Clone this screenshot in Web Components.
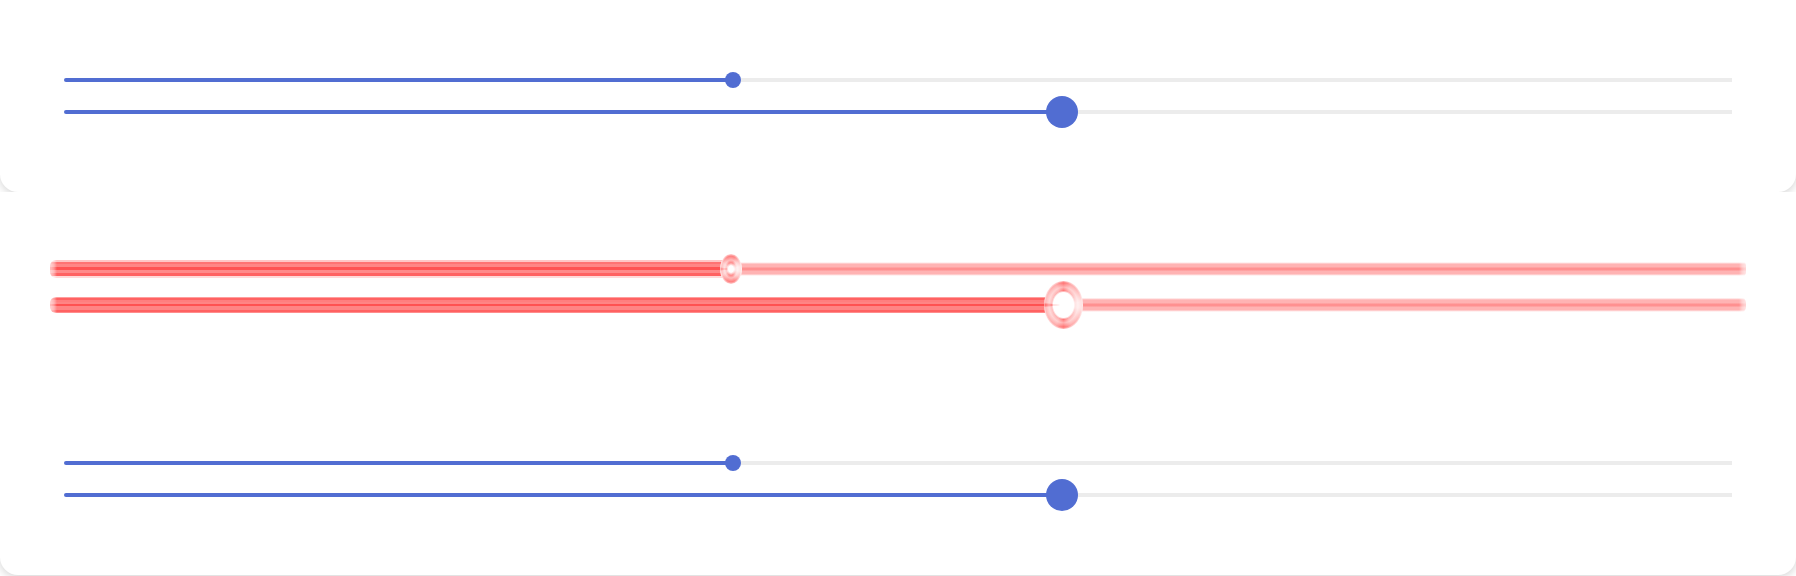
<!DOCTYPE html>
<html lang="en">
<head>
<meta charset="utf-8">
<meta name="viewport" content="width=device-width">
<title>Sliders</title>
<style>
body { margin: 0; background: #fff; font-family: Inter, sans-serif; }
</style>
</head>
<body>
<slider-board></slider-board>
<script>
class SliderBoard extends HTMLElement {
  constructor() {
    super();
    this.attachShadow({ mode: 'open' }).innerHTML = `
      <style>:host { display: flex; flex-direction: column; }</style>
      <slider-card>
        <range-slider value="40" label="Small"></range-slider>
        <range-slider value="60" label="Large" size="large"></range-slider>
      </slider-card>
      <slider-card variant="glow">
        <range-slider value="40" label="Small glow" variant="glow"></range-slider>
        <range-slider value="60" label="Large glow" variant="glow" size="large"></range-slider>
      </slider-card>
      <slider-card class="last">
        <range-slider value="40" label="Small"></range-slider>
        <range-slider value="60" label="Large" size="large"></range-slider>
      </slider-card>`;
  }
}

class SliderCard extends HTMLElement {
  constructor() {
    super();
    this.attachShadow({ mode: 'open' }).innerHTML = `
      <style>
        :host { display: block; overflow: hidden; }
        .card {
          display: flex; flex-direction: column; padding: 64px;
          background: #fff; border-radius: 0 0 18px 18px;
          box-shadow: 0 2px 10px rgba(0, 0, 0, .18);
        }
        :host(.last) { padding-bottom: 1px; }
        :host([variant=glow]) .card {
          padding: 59px 50px 60px; border-radius: 0; box-shadow: none;
        }
      </style>
      <div class="card"><slot></slot></div>`;
  }
}

class RangeSlider extends HTMLElement {
  constructor() {
    super();
    this.attachShadow({ mode: 'open' }).innerHTML = `
      <style>
        :host {
          display: block; --row: 32px; --w: 16px; --h: 16px; --track: 4px; --radius: 2px 0 0 2px;
          --fill: linear-gradient(#516dd2, #516dd2);
          --rest: linear-gradient(#ececec, #ececec);
          --thumb: #516dd2;
          --filled: calc((100% - var(--w)) * var(--pos) + var(--w) / 2);
          --sizes: var(--filled) 100%, 100% 100%;
        }
        :host([size=large]) { --w: 32px; --h: 32px; }
        :host([variant=glow]) {
          --row: 36px; --w: 22px; --h: 30px; --track: 18px; --radius: 6px;
          --filled: calc((100% - var(--w)) * var(--pos) + 4px);
          --sizes: var(--filled) 100%, var(--filled) 100%, 100% 100%, 100% 100%;
          --fill:
            linear-gradient(90deg, #fff9 1px, #fff6 4px, #fff0 7px),
            linear-gradient(#ffc6c6 0 2px, #ff7272 2px 4px, #ff8585 4px 7px, #ff5252 7px 10px, #ff8a8a 10px 13px, #ff6262 13px 16px, #ffdada 16px);
          --rest:
            linear-gradient(270deg, #fff9 1px, #fff6 4px, #fff0 7px),
            linear-gradient(#fff 2px, #ffe4e4 3px, #ffb3b3 4px 7px, #ff9090 8px 10px, #ffb3b3 11px 14px, #ffe4e4 15px, #fff 16px);
          --thumb: radial-gradient(closest-side, #fff 22%, #ff8c8c 42%, #ffbcbc 60%, #ff8080 85%, #ffbcbc 96%, #ffe4e4);
          --shine: conic-gradient(#fff0 15deg, #fff8 45deg, #fffc 75deg 105deg, #fff8 135deg, #fff0 165deg 195deg, #fff8 235deg, #fff8 258deg, #fff0 270deg, #fff8 282deg, #fff8 305deg, #fff0 345deg);
        }
        :host([variant=glow][size=large]) {
          --w: 39px; --h: 48px; --track: 16px;
          --fill:
            linear-gradient(90deg, #fff9 1px, #fff6 4px, #fff0 7px),
            linear-gradient(#ff9e9e 0 1px, #ff6262 1px 3px, #ff7f7f 3px 5px, #ff8585 5px 7px, #ff5252 7px 9px, #ff8585 9px 13px, #ff6262 13px 15px, #ff8c8c 15px);
          --rest:
            linear-gradient(270deg, #fff9 1px, #fff6 4px, #fff0 7px),
            linear-gradient(#fff 1px, #ffd0d0 2px, #ffb3b3 3px 6px, #ff9090 7px 9px, #ffb3b3 10px 13px, #ffe4e4 14px, #fff 15px);
          --thumb: radial-gradient(closest-side, #fff 52%, #ff7878 60%, #ffb0b0 74%, #ff7070 92%, #ffc0c0);
          --shine: conic-gradient(#fff0, #fff6 20deg, #fff8 45deg, #fffc 80deg 100deg, #fff8 135deg, #fff6 160deg, #fff0 180deg, #fff6 200deg, #fff8 240deg, #fff8 262deg, #f554 270deg, #fff8 278deg, #fff8 300deg, #fff6 340deg, #fff0);
        }
        input {
          -webkit-appearance: none; appearance: none; display: block;
          width: 100%; height: var(--row); margin: 0; background: none; cursor: pointer;
        }
        input::-webkit-slider-runnable-track {
          height: var(--track); border-radius: var(--radius);
          background: var(--fill), var(--rest);
          background-repeat: no-repeat;
          background-size: var(--sizes);
        }
        input::-webkit-slider-thumb {
          -webkit-appearance: none; box-sizing: border-box;
          width: var(--w); height: var(--h); border-radius: 50%;
          margin-top: calc((var(--track) - var(--h)) / 2);
          background: var(--shine, none), var(--thumb);
        }
        :host(:not([variant])) input::-webkit-slider-thumb { background: var(--thumb); }
        input:focus-visible { outline: 2px solid #a9b6e9; }
      </style>
      <input type="range" min="0" max="100">`;
    this.input = this.shadowRoot.querySelector('input');
    this.input.addEventListener('input', () => this.paint());
  }
  connectedCallback() {
    this.input.value = this.getAttribute('value');
    this.input.setAttribute('aria-label', this.getAttribute('label'));
    this.paint();
  }
  paint() { this.style.setProperty('--pos', this.input.value / 100); }
}

customElements.define('range-slider', RangeSlider);
customElements.define('slider-card', SliderCard);
customElements.define('slider-board', SliderBoard);
</script>
</body>
</html>
